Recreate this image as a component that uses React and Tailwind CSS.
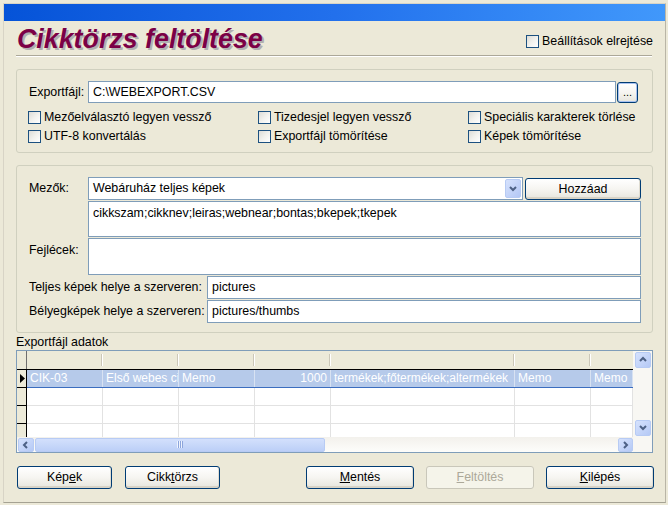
import React from 'react';

const COLS = [
  { w: 76, text: 'CIK-03' },
  { w: 76, text: 'Első webes cikk' },
  { w: 76, text: 'Memo' },
  { w: 76, text: '1000', right: true },
  { w: 184, text: 'termékek;főtermékek;altermékek' },
  { w: 76, text: 'Memo' },
  { w: 42, text: 'Memo' },
];

function Check({ label, className = '' }) {
  return (
    <div className={`flex items-center h-[13px] ${className}`}>
      <span className="w-[13px] h-[13px] shrink-0 border border-[#1c5180] bg-linear-to-br from-[#dcdcd7] via-[#f1f1ed] to-white" />
      <span className="ml-[3px] leading-[13px] whitespace-nowrap">{label}</span>
    </div>
  );
}

function XpButton({ children, className = '', disabled }) {
  return (
    <div
      className={`flex items-center justify-center rounded-[3px] border whitespace-nowrap ${
        disabled
          ? 'border-[#c9c7ba] text-[#aca899] bg-[#f5f4ea]'
          : 'border-[#003c74] bg-linear-to-b from-white via-[#f6f5f1] to-[#e6e5dd] shadow-[inset_0_-2px_0_#d8d3c6,inset_-1px_0_0_#e0ddd2]'
      } ${className}`}
    >
      {children}
    </div>
  );
}

function Field({ children, className = '' }) {
  return (
    <div className={`border border-[#7f9db9] bg-white pl-[4px] whitespace-nowrap overflow-hidden ${className}`}>
      {children}
    </div>
  );
}

function ScrollBtn({ dir, className = '' }) {
  const paths = {
    up: 'M2 6 L5 3 L8 6',
    down: 'M2 3 L5 6 L8 3',
    left: 'M6 2 L3 5 L6 8',
    right: 'M3 2 L6 5 L3 8',
  };
  return (
    <div className={`flex items-center justify-center rounded-[2px] border border-[#b7cbf4] bg-linear-to-br from-[#d6e2fd] to-[#b5c9f5] ${className}`}>
      <svg width="10" height="10" viewBox="0 0 10 10">
        <path d={paths[dir]} fill="none" stroke="#4d6185" strokeWidth="2" />
      </svg>
    </div>
  );
}

function DataGrid() {
  const emptyRows = [0, 1, 2];
  return (
    <div className="mt-[1px] h-[103px] w-[637px] border border-[#7f9db9] bg-white flex flex-col">
      <div className="flex h-[86px]">
        <div className="w-[616px] h-[86px] overflow-hidden flex flex-col">
          {/* header */}
          <div className="flex h-[18px] bg-[#ecead9] shrink-0">
            <div className="w-[10px] h-[18px] border-r border-[#6f6f6f] bg-[#ecead9] shrink-0" />
            {COLS.map((c, i) => (
              <div key={i} style={{ width: c.w }} className="h-[18px] shrink-0 flex items-center justify-end">
                {i < COLS.length - 1 && (
                  <span className="w-[2px] h-[12px] border-l border-[#cbc7b8] border-r border-r-white" />
                )}
              </div>
            ))}
          </div>
          {/* selected row */}
          <div className="flex h-[19px] shrink-0 border-t border-black">
            <div className="w-[10px] h-[18px] shrink-0 border-r border-b border-black bg-[#ecead9] flex items-center">
              <svg width="7" height="9" viewBox="0 0 7 9" className="ml-[2px]">
                <path d="M1 0 L6 4.5 L1 9 Z" fill="#000" />
              </svg>
            </div>
            <div className="flex h-[18px] bg-[#b6caea] border-b border-[#3b6dbf] text-white text-[12px]">
              {COLS.map((c, i) => (
                <div
                  key={i}
                  style={{ width: c.w }}
                  className={`h-[17px] shrink-0 leading-[17px] overflow-hidden whitespace-nowrap border-r border-[#d8e2f2] ${
                    c.right ? 'text-right pr-[3px]' : 'pl-[3px]'
                  }`}
                >
                  {c.text}
                </div>
              ))}
            </div>
          </div>
          {emptyRows.map((r) => (
            <div key={r} className="flex h-[18px] shrink-0">
              <div className="w-[10px] h-[18px] shrink-0 border-r border-b border-black bg-[#ecead9]" />
              {COLS.map((c, i) => (
                <div key={i} style={{ width: c.w }} className="h-[18px] shrink-0 border-r border-b border-[#e2e2e2]" />
              ))}
            </div>
          ))}
        </div>
        {/* vertical scrollbar */}
        <div className="w-[19px] h-[86px] bg-[#f8f7f3] flex flex-col justify-between items-center py-[1px]">
          <ScrollBtn dir="up" className="w-[16px] h-[16px]" />
          <ScrollBtn dir="down" className="w-[16px] h-[16px]" />
        </div>
      </div>
      {/* horizontal scrollbar */}
      <div className="flex h-[15px]">
        <div className="w-[616px] h-[15px] flex items-center bg-linear-to-b from-[#f3f1ec] to-[#fdfdfb]">
          <ScrollBtn dir="left" className="w-[16px] h-[14px] ml-[1px]" />
          <div className="ml-[1px] w-[290px] h-[14px] rounded-[2px] border border-[#b7cbf4] bg-linear-to-b from-[#d3e0fc] to-[#bccff7] flex items-center justify-center">
            <svg width="6" height="7" viewBox="0 0 6 7">
              <path d="M0.5 0 V7 M2.5 0 V7 M4.5 0 V7" stroke="#eef3fe" strokeWidth="1" />
              <path d="M1.5 0 V7 M3.5 0 V7 M5.5 0 V7" stroke="#8ca5dc" strokeWidth="1" />
            </svg>
          </div>
          <div className="flex-1" />
          <ScrollBtn dir="right" className="w-[15px] h-[14px]" />
        </div>
        <div className="w-[19px] h-[15px] bg-[#f8f7f3]" />
      </div>
    </div>
  );
}

export default function App() {
  return (
    <div className="w-[668px] h-[505px] bg-[#ece9d8] overflow-hidden font-['Liberation_Sans',Arial,sans-serif] text-[12.4px] text-black">
      <div className="ml-[3px] mt-[3px] w-[663px] h-[500px] border-l border-t border-[#d8d4c6] border-r border-b border-r-[#b9b5a6] border-b-[#a5a293] flex flex-col">
        {/* title bar strip */}
        <div className="h-[17px] shrink-0 bg-linear-to-r from-[#0553d8] via-[#2270ec] to-[#4198fb]" />

        <div className="pl-[12px] pr-[11px] flex flex-col">
          {/* ── Header ── */}
          <div className="h-[34px] flex justify-between">
            <div className="ml-[1px] mt-[5px] text-[26.8px] leading-[27px] font-bold italic text-[#7b0046] [text-shadow:2px_2px_0_#b0b0b0]">
              Cikktörzs feltöltése
            </div>
            <Check label="Beállítások elrejtése" className="mt-[14px] mr-[1px]" />
          </div>
          <div className="w-[636px] h-[2px] border-t border-[#aca899] border-b border-b-white" />

          {/* ── Export file group ── */}
          <div className="mt-[12px] h-[84px] w-[637px] border border-[#d0d0bf] rounded-[3px] pl-[11px] pr-[14px] flex flex-col">
            <div className="mt-[11px] flex h-[22px]">
              <div className="w-[60px] pl-[1px] leading-[22px]">Exportfájl:</div>
              <Field className="w-[528px] h-[22px] leading-[20px]">{'C:\\WEBEXPORT.CSV'}</Field>
              <XpButton className="ml-[1px] mt-[1px] w-[21px] h-[21px] border-[#2a5bbd] shadow-[inset_0_0_0_1px_#a9c2f0] text-[11px] leading-[10px] pb-[2px]">
                ...
              </XpButton>
            </div>
            <div className="mt-[8px] flex">
              <Check label="Mezőelválasztó legyen vessző" className="w-[230px]" />
              <Check label="Tizedesjel legyen vessző" className="w-[210px]" />
              <Check label="Speciális karakterek törlése" />
            </div>
            <div className="mt-[6px] flex">
              <Check label="UTF-8 konvertálás" className="w-[230px]" />
              <Check label="Exportfájl tömörítése" className="w-[210px]" />
              <Check label="Képek tömörítése" />
            </div>
          </div>

          {/* ── Fields group ── */}
          <div className="mt-[12px] h-[168px] w-[637px] border border-[#d0d0bf] rounded-[3px] pl-[12px] pr-[11px] flex flex-col">
            <div className="mt-[11px] flex h-[23px]">
              <div className="w-[59px] leading-[23px]">Mezők:</div>
              <div className="w-[435px] h-[23px] border border-[#7f9db9] bg-white flex items-center">
                <span className="flex-1 pl-[4px]">Webáruház teljes képek</span>
                <div className="mr-[1px] w-[16px] h-[19px] rounded-[2px] border border-[#b7cbf4] bg-linear-to-br from-[#d6e2fd] to-[#b3c7f5] flex items-center justify-center">
                  <svg width="10" height="10" viewBox="0 0 10 10">
                    <path d="M2 3 L5 6 L8 3" fill="none" stroke="#4d6185" strokeWidth="2" />
                  </svg>
                </div>
              </div>
              <XpButton className="ml-[2px] mt-[1px] w-[116px] h-[22px]">Hozzáad</XpButton>
            </div>
            <div className="mt-[1px] flex">
              <div className="w-[59px]" />
              <Field className="w-[553px] h-[36px] pt-[4px] leading-[14px]">
                cikkszam;cikknev;leiras;webnear;bontas;bkepek;tkepek
              </Field>
            </div>
            <div className="mt-[1px] flex">
              <div className="w-[59px] pt-[5px] leading-[14px]">Fejlécek:</div>
              <Field className="w-[553px] h-[37px]" />
            </div>
            <div className="mt-[1px] flex h-[23px]">
              <div className="w-[178px] leading-[23px]">Teljes képek helye a szerveren:</div>
              <Field className="w-[434px] h-[23px] leading-[21px]">pictures</Field>
            </div>
            <div className="mt-[1px] flex h-[23px]">
              <div className="w-[178px] leading-[23px]">Bélyegképek helye a szerveren:</div>
              <Field className="w-[434px] h-[23px] leading-[21px]">pictures/thumbs</Field>
            </div>
          </div>

          {/* ── Data grid ── */}
          <div className="mt-[2px] h-[14px] leading-[14px]">Exportfájl adatok</div>
          <DataGrid />

          {/* ── Buttons ── */}
          <div className="mt-[13px] flex justify-between">
            <div className="ml-[1px] flex gap-[13px]">
              <XpButton className="w-[95px] h-[23px]">
                Kép<span className="underline">e</span>k
              </XpButton>
              <XpButton className="w-[95px] h-[23px]">
                Cikk<span className="underline">t</span>örzs
              </XpButton>
            </div>
            <div className="flex gap-[12px]">
              <XpButton className="w-[108px] h-[23px]">
                <span className="underline">M</span>entés
              </XpButton>
              <XpButton disabled className="w-[108px] h-[23px]">
                <span className="underline">F</span>eltöltés
              </XpButton>
              <XpButton className="w-[108px] h-[23px]">
                <span className="underline">K</span>ilépés
              </XpButton>
            </div>
          </div>
        </div>
      </div>
    </div>
  );
}
